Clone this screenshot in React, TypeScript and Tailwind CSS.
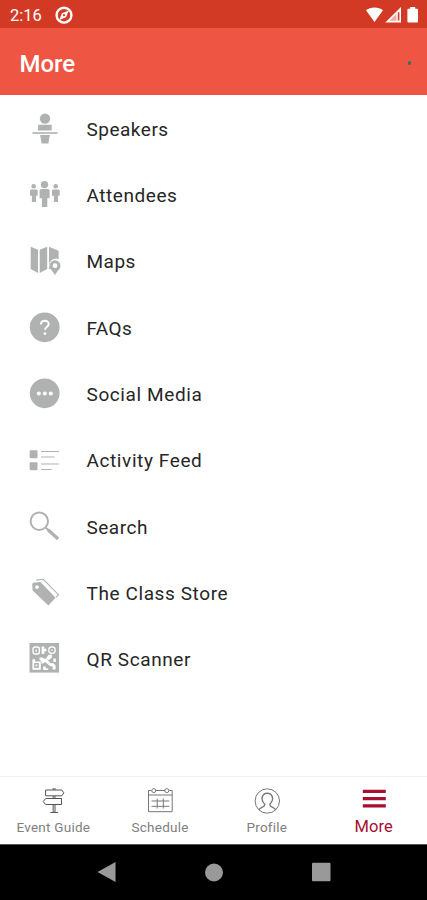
import type { ReactNode } from "react";

const GRAY = "#b0b1b1";

function Icon({ children }: { children: ReactNode }) {
  return (
    <svg width="32" height="32" viewBox="0 0 32 32" fill={GRAY} className="shrink-0">
      {children}
    </svg>
  );
}

const items: { label: string; spacing: string; icon: ReactNode }[] = [
  {
    label: "Speakers",
    spacing: "tracking-[0.5px]",
    icon: (
      <>
        <circle cx="16" cy="5.6" r="5.2" />
        <path d="M9.3 11.7h13.4v5.8H8.8zM11.2 22h9.6l-1.4 8.6h-6.8z" />
        <path d="M3.5 19.2h25v1.6h-25z" />
      </>
    ),
  },
  {
    label: "Attendees",
    spacing: "tracking-[0.55px]",
    icon: (
      <>
        <circle cx="15.5" cy="5.6" r="3.7" />
        <path d="M12 10h7.3l1.3 1.2v8h-2.3V28h-5.4v-8.8h-2.3v-8z" />
        <circle cx="4.7" cy="7.2" r="2.3" />
        <path d="M2 10.4h5.7l1 .9v5.5H7v6.3H2.9v-6.3H1v-5.5z" />
        <circle cx="26.7" cy="7.2" r="2.3" />
        <path d="M24 10.4h5.7l1 .9v5.5H29v6.3h-4.1v-6.3H23v-5.5z" />
      </>
    ),
  },
  {
    label: "Maps",
    spacing: "tracking-[0.5px]",
    icon: (
      <>
        <path d="M1.7.8 9 3.8V27l-7.3-4zM10.7 3.8l7.5-3V23l-7.5 4zM20 .8l9.6 4v8.4c-5-1.6-9.8 1.6-9.3 6.6.1 1.4.6 2.6 1.4 3.8L20 22.8z" />
        <path
          fillRule="evenodd"
          d="M26 14.3a5.5 5.5 0 0 0-5.5 5.5c0 3.6 3.1 4.8 5.5 9.4 2.4-4.6 5.5-5.8 5.5-9.4a5.5 5.5 0 0 0-5.5-5.5zm0 3a2.4 2.4 0 1 1 0 4.8 2.4 2.4 0 0 1 0-4.8z"
        />
      </>
    ),
  },
  {
    label: "FAQs",
    spacing: "tracking-[0.4px]",
    icon: (
      <>
        <circle cx="15.7" cy="15.3" r="14.9" />
        <path d="M11.9 12.5c.1-5 7.8-4.8 7.8-.5 0 2.9-3.7 3-3.7 5.8" fill="none" stroke="#fff" strokeWidth="2" />
        <circle cx="15.9" cy="21.6" r="1.4" fill="#fff" />
      </>
    ),
  },
  {
    label: "Social Media",
    spacing: "tracking-[0.6px]",
    icon: (
      <>
        <circle cx="15.7" cy="15.3" r="14.9" />
        <g fill="#fff">
          <circle cx="9.8" cy="15.4" r="2" />
          <circle cx="15.8" cy="15.4" r="2" />
          <circle cx="21.8" cy="15.4" r="2" />
        </g>
      </>
    ),
  },
  {
    label: "Activity Feed",
    spacing: "tracking-[0.6px]",
    icon: (
      <>
        <rect x="0.7" y="5.2" width="7.8" height="8" rx="1" />
        <rect x="0.7" y="17.3" width="7.8" height="8" rx="1" />
        <path d="M12 6h18v1H12zM12 11.6h13.5v1H12zM12 18.6h18v1H12zM12 24h10.7v1H12z" />
      </>
    ),
  },
  {
    label: "Search",
    spacing: "tracking-[0.5px]",
    icon: (
      <g fill="none" stroke={GRAY}>
        <circle cx="10.3" cy="10.2" r="8.7" strokeWidth="2" />
        <path d="m16.8 16.8 3 2.8" strokeWidth="2" />
        <path d="m19 18.8 10.2 9.2" strokeWidth="3.2" />
      </g>
    ),
  },
  {
    label: "The Class Store",
    spacing: "tracking-[0.6px]",
    icon: (
      <>
        <path
          fillRule="evenodd"
          d="M4.2 5.8 11.5 5 26.6 20.7l-7.2 7.8L3.6 13.6 3.2 7zM8 8.2a1.9 1.9 0 1 0 0 3.8 1.9 1.9 0 0 0 0-3.8z"
        />
        <path d="m7.2 3.1 7.1-.8L29.5 17.7l-2.4 2.5" fill="none" stroke={GRAY} strokeWidth="1.1" />
      </>
    ),
  },
  {
    label: "QR Scanner",
    spacing: "tracking-[0.6px]",
    icon: (
      <>
        <rect x="0.5" y="0" width="29.6" height="29.6" />
        <g fill="none" stroke="#fff" strokeWidth="1.3">
          <rect x="4" y="4" width="6.4" height="7" rx="2.2" />
          <rect x="19.8" y="4" width="6.4" height="6.4" rx="2.8" />
          <path d="M7.2 6.4v2.4M22.3 7.2h1.4" />
        </g>
        <path
          fill="#fff"
          d="M3.4 16.2h2.8v2.2h5.6v8.4H3.4zM12.6 3.6h2.6v2.2h2.2v2.5h-2v2.6h-2.8zM19.5 11.8h3.4v2.8l-2.4 2.2h-2.2l3.6 3.4h2.5l2.2 2.2v4h-3v-3.2h-2.4l-5-4.2-2 1.6h-1.8v-2.4l-2-1.8v-2h3l2 1.4h1.4zM24.4 15.5h2.4V19h-2.4zM14.2 23.4h2.6v2h2.4v1.6h-5z"
        />
        <path d="M5.2 20h4.7v4.9H5.2z" />
        <path fill="#fff" d="M6.7 21.5h1.7v1.8H6.7z" />
      </>
    ),
  },
];

function StatusBar() {
  return (
    <div className="flex h-[28px] shrink-0 items-center bg-[#d23a25] pl-[10px] pr-[8px] text-white">
      <span className="mt-[3px] w-[34px] text-[16.5px] leading-5">2:16</span>
      <svg width="19" height="19" viewBox="0 0 19 19" className="ml-[10.5px] mt-[2px]">
        <circle cx="9" cy="9.2" r="7.4" fill="none" stroke="#fff" strokeWidth="2.4" />
        <path fill="#fff" fillRule="evenodd" d="M13.8 4.4 11 11.2l-6.8 2.9L7 7.3zM9 8.1a1.1 1.1 0 1 0 0 2.2 1.1 1.1 0 0 0 0-2.2z" />
      </svg>
      <svg width="56" height="18" viewBox="0 0 56 18" fill="#fff" className="ml-auto mt-[2px]">
        <path d="M3 4.2C7.7.5 15.3.5 20 4.2L11.5 16z" />
        <path fillRule="evenodd" d="M38 1v15.5H22.3zM34.8 6.2v8.3h1.6V6.2z" />
        <path fill="#f3aaa0" d="m33.4 7.8-7 7h7z" />
        <path d="M45.2 2.7h2V1h5v1.7h2q.8 0 .8.9v12q0 1-.9 1h-8.7q-1 0-1-1v-12q0-.9.8-.9z" />
      </svg>
    </div>
  );
}

function Tab({ label, children, active = false }: { label: string; children: ReactNode; active?: boolean }) {
  return (
    <button
      className={`flex flex-1 flex-col items-center pt-[9px] ${
        active ? "text-[16.5px] tracking-[0.1px] text-[#a80d32]" : "text-[13.5px] tracking-[0.25px] text-[#808080]"
      }`}
    >
      <svg width="30" height="30" viewBox="0 0 30 30" fill="none" stroke="#777" strokeWidth="1">
        {children}
      </svg>
      <span className={active ? "mt-px leading-5" : "mt-px whitespace-nowrap leading-5"}>{label}</span>
    </button>
  );
}

export default function App() {
  return (
    <div className="flex h-[900px] w-[427px] flex-col overflow-hidden bg-white font-['Roboto',sans-serif]">
      <StatusBar />
      <header className="flex h-[67.4px] shrink-0 items-center justify-between bg-[#ee5543] pl-[19.5px] pr-[16.5px]">
        <h1 className="mt-[4px] text-[24px] font-medium text-white">More</h1>
        <span className="mt-[2px] h-[4px] w-[3px] rounded-full bg-[#2b716b]" />
      </header>
      <main className="min-h-0 flex-1">
        <ul>
          {items.map((item) => (
            <li key={item.label} className="flex h-[66.3px] items-center pl-[29px] pt-px">
              <Icon>{item.icon}</Icon>
              <span className={`ml-[25.5px] mt-[2px] text-[19px] text-[#262626] ${item.spacing}`}>{item.label}</span>
            </li>
          ))}
        </ul>
      </main>
      <nav className="flex h-[68px] shrink-0 border-t border-[#f1f1f1]">
        <Tab label="Event Guide">
          <path d="M15.2 2v2M17 2v2M7.6 4h16.2l2 2.8-2 3H7.6zM23.5 12.5H7.7l-2.5 3 2.5 3h15.8zM15.2 10v2.5M17 10v2.5M15.2 18.5V26M17 18.5V26M12.4 26.5h7.8" stroke="#555" />
        </Tab>
        <Tab label="Schedule">
          <path d="M6.5 4.5h-3v21.2h23.7V4.5h-3M10.5 4.5h9.7M3.5 9h23.7M6.5 15h17.8M6.5 20.3h17.8M12.2 12.5v10M18.3 12.5v10" />
          <circle cx="8.8" cy="4.6" r="2" />
          <circle cx="21.8" cy="4.6" r="2" />
        </Tab>
        <Tab label="Profile">
          <circle cx="15.3" cy="15" r="12.2" />
          <path d="M7 24c.5-3 5.8-2.4 5.8-5.6-2.3-2.6-3.6-5.2-2.4-7.8 1.4-4.4 8.4-4.4 9.8 0 1.2 2.6-.1 5.2-2.4 7.8 0 3.2 5.3 2.6 5.8 5.6" strokeWidth="1.4" />
        </Tab>
        <Tab label="More" active>
          <path d="M3.8 5.4h23M3.8 12.6h23M3.8 19.8h23" stroke="#a80d32" strokeWidth="3.3" />
        </Tab>
      </nav>
      <footer className="flex h-[56px] shrink-0 justify-center border-t border-[#555] bg-black">
        <svg width="240" height="55" viewBox="0 0 240 55" fill="#999">
          <path d="M3.5 27 21.5 17v20z" />
          <circle cx="120" cy="27.5" r="9" />
          <rect x="218" y="17.8" width="18.5" height="18.5" rx="1" />
        </svg>
      </footer>
    </div>
  );
}
